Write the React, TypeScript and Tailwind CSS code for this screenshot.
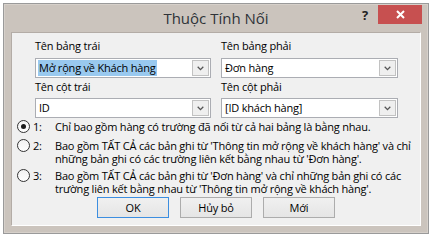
function Chevron() {
  return (
    <svg width="7" height="5" viewBox="0 0 7 5" className="block">
      <path d="M0.7 0.8 L3.5 3.6 L6.3 0.8" fill="none" stroke="#555" strokeWidth="1.3" />
    </svg>
  );
}

function Combo({ children }: { children: React.ReactNode }) {
  return (
    <div className="h-[20px] bg-white border border-[#abadb3] flex items-stretch p-[1px]">
      <div className="flex-1 flex items-center pl-[1px] text-black whitespace-nowrap overflow-hidden">{children}</div>
      <div className="w-[17px] border border-[#c2c2c2] bg-[#efefef] flex items-center justify-center">
        <Chevron />
      </div>
    </div>
  );
}

function Radio({ checked }: { checked?: boolean }) {
  return (
    <div className="w-[13px] h-[13px] rounded-full border border-[#333] bg-gradient-to-b from-[#f2f2f2] to-white flex items-center justify-center">
      {checked && <div className="w-[5px] h-[5px] rounded-full bg-[#1a1a1a]" />}
    </div>
  );
}

function Option({ n, lines, checked, className }: { n: string; lines: string[]; checked?: boolean; className?: string }) {
  return (
    <div className={"flex items-start " + (className ?? "")}>
      <Radio checked={checked} />
      <div className="ml-[3px] w-[22px] leading-[13px] text-black">{n}</div>
      <div className="leading-[13px] text-black">
        {lines.map((l) => (
          <div key={l} className="whitespace-nowrap">{l}</div>
        ))}
      </div>
    </div>
  );
}

export default function App() {
  return (
    <div className="w-[433px] h-[238px] bg-white p-[3px] font-['Open_Sans',sans-serif] text-[11px] font-medium tracking-[-0.2px]">
      <div className="w-[426px] h-[231px] border border-[#9a9a9a] bg-[#cbc4bd] shadow-[inset_0_0_0_1px_#d6d0ca]">
        <div className="relative h-[28px] flex items-center justify-center">
          <span className="text-[15px] font-normal tracking-normal text-[#2f3338]">Thuộc Tính Nối</span>
          <span className="absolute left-[358px] top-[2px] text-[13px] font-bold text-[#222] tracking-normal">?</span>
          <div className="absolute left-[374px] top-[1px] w-[44px] h-[19px] bg-[#c75050] flex items-center justify-center">
            <svg width="9" height="9" viewBox="0 0 9 9">
              <path d="M1 1 L8 8 M8 1 L1 8" stroke="white" strokeWidth="2" />
            </svg>
          </div>
        </div>
        <div className="ml-[7px] w-[410px] h-[194px] bg-[#f0f0f0] border-t border-l border-[#b3aca6] border-r-white border-b-white border-r border-b">
          <div className="pl-[23px] pt-[6px] grid grid-cols-[176px_177px] gap-x-[10px]">
            <div className="flex flex-col">
              <div className="h-[13px] leading-[13px] text-black whitespace-nowrap">Tên bảng trái</div>
              <div className="mt-[6px]">
                <Combo>
                  <span className="bg-[#99c9ef] leading-[16px] px-[1px]">Mở rộng về Khách hàng</span>
                </Combo>
              </div>
              <div className="mt-[2px] h-[13px] leading-[13px] text-black whitespace-nowrap">Tên cột trái</div>
              <div className="mt-[5px]">
                <Combo>
                  <span className="px-[1px]">ID</span>
                </Combo>
              </div>
            </div>
            <div className="flex flex-col">
              <div className="h-[13px] leading-[13px] text-black whitespace-nowrap">Tên bảng phải</div>
              <div className="mt-[6px]">
                <Combo>
                  <span className="px-[1px]">Đơn hàng</span>
                </Combo>
              </div>
              <div className="mt-[2px] h-[13px] leading-[13px] text-black whitespace-nowrap">Tên cột phải</div>
              <div className="mt-[5px]">
                <Combo>
                  <span className="px-[1px]">[ID khách hàng]</span>
                </Combo>
              </div>
            </div>
          </div>
          <div className="pl-[5px] mt-[2px] flex flex-col">
            <Option n="1:" checked lines={["Chỉ bao gồm hàng có trường đã nối từ cả hai bảng là bằng nhau."]} />
            <Option
              className="mt-[6px]"
              n="2:"
              lines={[
                "Bao gồm TẤT CẢ các bản ghi từ 'Thông tin mở rộng về khách hàng' và chỉ",
                "những bản ghi có các trường liên kết bằng nhau từ 'Đơn hàng'.",
              ]}
            />
            <Option
              className="mt-[4px]"
              n="3:"
              lines={[
                "Bao gồm TẤT CẢ các bản ghi từ 'Đơn hàng' và chỉ những bản ghi có các",
                "trường liên kết bằng nhau từ 'Thông tin mở rộng về khách hàng'.",
              ]}
            />
          </div>
          <div className="pl-[85px] mt-[2px] flex gap-[11px]">
            <button className="w-[72px] h-[21px] border border-[#3c8ee0] bg-gradient-to-b from-[#f0f0f0] to-[#e5e5e5] text-black leading-none">OK</button>
            <button className="w-[72px] h-[21px] border border-[#acacac] bg-gradient-to-b from-[#f0f0f0] to-[#e5e5e5] text-black leading-none">Hủy bỏ</button>
            <button className="w-[72px] h-[21px] border border-[#acacac] bg-gradient-to-b from-[#f0f0f0] to-[#e5e5e5] text-black leading-none">Mới</button>
          </div>
        </div>
      </div>
    </div>
  );
}
